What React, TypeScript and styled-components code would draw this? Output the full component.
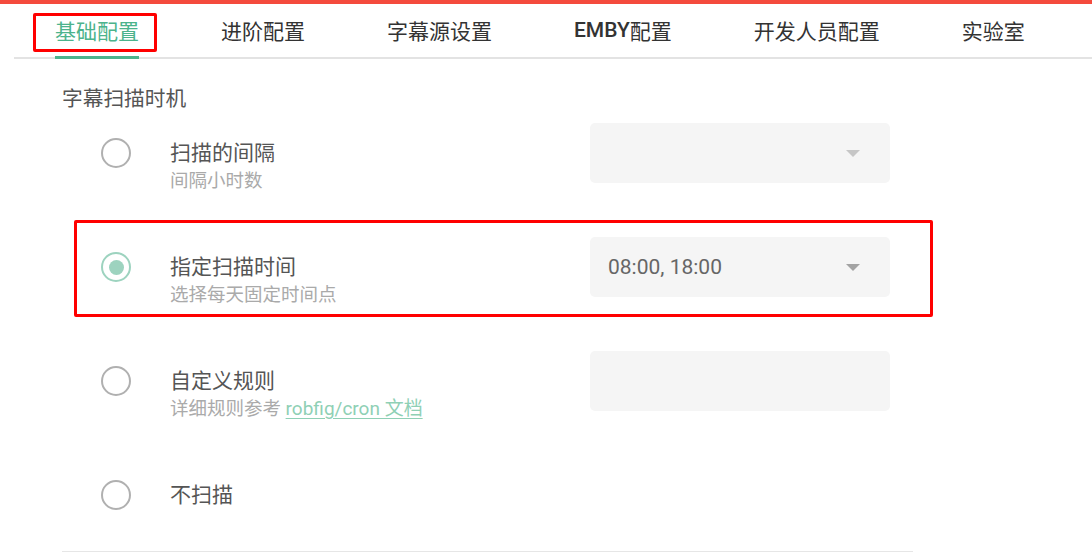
import React from 'react'
import styled, { createGlobalStyle } from 'styled-components'

const GlobalStyle = createGlobalStyle`
  html, body {
    margin: 0;
    padding: 0;
    background: #fff;
  }
  body {
    font-family: Roboto, "Noto Sans CJK SC", sans-serif;
    width: 1092px;
    height: 553px;
    overflow: hidden;
  }
`

const tabs = ['基础配置', '进阶配置', '字幕源设置', 'EMBY配置', '开发人员配置', '实验室']

const options = [
  { label: '扫描的间隔', sub: '间隔小时数', field: 'select', value: '', disabled: true },
  { label: '指定扫描时间', sub: '选择每天固定时间点', field: 'select', value: '08:00, 18:00', checked: true },
  { label: '自定义规则', sub: 'cron', field: 'input', value: '' },
  { label: '不扫描', sub: '', field: 'none', value: '' },
]

const Page = styled.div`
  position: relative;
  border-top: 4px solid #f44a3d;
`

const TabBar = styled.div`
  display: flex;
  margin-left: 14px;
  height: 53px;
  border-bottom: 2px solid #e3e3e3;
`

const Tab = styled.div<{ $active?: boolean }>`
  position: relative;
  display: flex;
  align-items: center;
  padding: 0 41px 2px;
  font-size: 21px;
  color: ${props => (props.$active ? '#4cb38c' : '#333')};
  white-space: nowrap;

  &:after {
    content: '';
    display: ${props => (props.$active ? 'block' : 'none')};
    position: absolute;
    left: 41px;
    right: 41px;
    bottom: -2px;
    height: 3px;
    background: #4cb38c;
  }
`

const Latin = styled.span`
  font-weight: 500;
`

const Content = styled.section`
  padding-left: 62px;
  width: 851px;
`

const Heading = styled.h3`
  margin: 26px 0 10px;
  font-size: 20.7px;
  line-height: 28px;
  font-weight: 400;
  color: #555;
`

const Rows = styled.div`
  display: flex;
  flex-direction: column;
  gap: 42px;
`

const Row = styled.div`
  display: grid;
  grid-template-columns: 108px 420px 300px;
  align-items: start;
  min-height: 60px;
`

const RadioCell = styled.div`
  padding: 15px 0 0 39px;
`

const Radio = styled.div<{ $checked?: boolean }>`
  box-sizing: border-box;
  width: 30px;
  height: 30px;
  border-radius: 50%;
  border: 2.5px solid ${props => (props.$checked ? '#9dd3bf' : '#b0b0b0')};
  display: flex;
  align-items: center;
  justify-content: center;

  &:after {
    content: '';
    display: ${props => (props.$checked ? 'block' : 'none')};
    width: 15px;
    height: 15px;
    border-radius: 50%;
    background: #9dd3bf;
  }
`

const LabelBlock = styled.div`
  padding-top: 16px;
`

const Label = styled.div`
  font-size: 21px;
  line-height: 28px;
  color: #555;
`

const Sub = styled.div`
  font-size: 18.5px;
  line-height: 28px;
  color: #aaa;
`

const DocLink = styled.a`
  color: #8fd0b5;
  font-size: 19px;
  text-decoration: underline;
  text-underline-offset: 3px;
`

const Field = styled.div`
  display: flex;
  align-items: center;
  justify-content: space-between;
  height: 60px;
  padding: 0 30px 0 18px;
  border-radius: 5px;
  background: #f5f5f5;
  font-size: 21px;
  color: #666;
`

const Arrow = styled.span<{ $disabled?: boolean }>`
  width: 0;
  height: 0;
  margin-left: auto;
  border-left: 7px solid transparent;
  border-right: 7px solid transparent;
  border-top: 7px solid ${props => (props.$disabled ? '#c6c6c6' : '#a3a3a3')};
`

const Divider = styled.div`
  margin-top: 26px;
  height: 1px;
  background: #e6e6e6;
`

const Mark = styled.div<{ $l: number; $t: number; $w: number; $h: number }>`
  position: absolute;
  left: ${props => props.$l}px;
  top: ${props => props.$t}px;
  width: ${props => props.$w}px;
  height: ${props => props.$h}px;
  box-sizing: border-box;
  border: 3px solid #f00;
  border-radius: 2px;
  pointer-events: none;
`

export default function App() {
  return (
    <Page>
      <GlobalStyle />
      <TabBar>
        {tabs.map((t, i) => (
          <Tab key={t} $active={i === 0}>
            {t.startsWith('EMBY') ? (
              <>
                <Latin>EMBY</Latin>配置
              </>
            ) : (
              t
            )}
          </Tab>
        ))}
      </TabBar>
      <Content>
        <Heading>字幕扫描时机</Heading>
        <Rows>
          {options.map(o => (
            <Row key={o.label}>
              <RadioCell>
                <Radio $checked={o.checked} />
              </RadioCell>
              <LabelBlock>
                <Label>{o.label}</Label>
                {o.sub === 'cron' ? (
                  <Sub>
                    详细规则参考 <DocLink href="#">robfig/cron 文档</DocLink>
                  </Sub>
                ) : (
                  o.sub && <Sub>{o.sub}</Sub>
                )}
              </LabelBlock>
              {o.field !== 'none' && (
                <Field>
                  <span>{o.value}</span>
                  {o.field === 'select' && <Arrow $disabled={o.disabled} />}
                </Field>
              )}
            </Row>
          ))}
        </Rows>
        <Divider />
      </Content>
      <Mark $l={33} $t={9} $w={124} $h={39} />
      <Mark $l={74} $t={216} $w={859} $h={97} />
    </Page>
  )
}
